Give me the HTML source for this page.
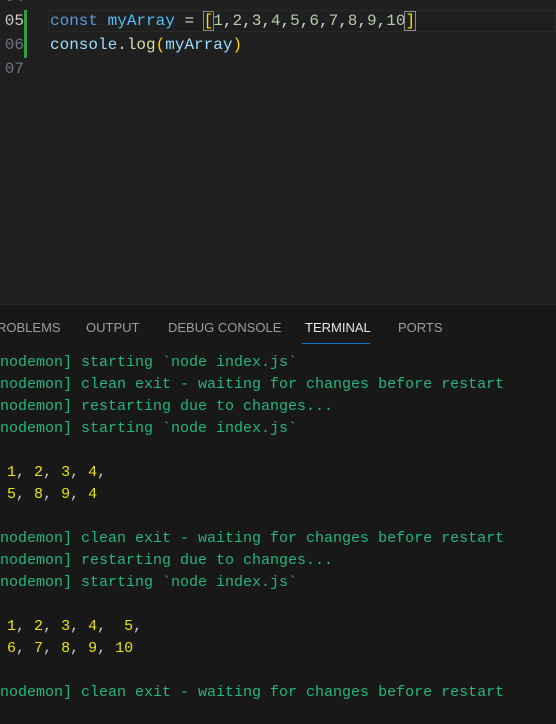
<!DOCTYPE html>
<html><head><style>
html,body{margin:0;padding:0;width:556px;height:723px;overflow:hidden;background:#1f1f1f;}
.ed{position:absolute;left:0;top:0;width:556px;height:304px;background:#1f1f1f;font-family:"Liberation Mono",monospace;font-size:16px;}
.ln{position:absolute;left:-6px;color:#6e7681;width:30px;text-align:right;}
.code{position:absolute;left:50px;white-space:pre;color:#d4d4d4;}
.panel{position:absolute;left:0;top:304px;width:556px;height:419px;background:#181818;border-top:1px solid #2b2b2b;}
.tab{position:absolute;top:15px;font-family:"Liberation Sans",sans-serif;font-size:13px;color:#9d9d9d;}
.t{position:absolute;white-space:pre;font-family:"Liberation Mono",monospace;font-size:15px;color:#23b77c;}
.y{color:#e5e510}.w{color:#cccccc}
</style></head><body>
<div class="ed">
<div class="ln" style="top:-12px">04</div>
<div class="ln" style="top:12px;color:#cccccc">05</div>
<div class="ln" style="top:36px">06</div>
<div class="ln" style="top:60px">07</div>
<div style="position:absolute;left:24px;top:10px;width:3px;height:48px;background:#2ea043"></div>
<div style="position:absolute;left:48px;top:10px;width:508px;height:22px;border:1px solid #282828;box-sizing:border-box"></div>
<div class="code" style="top:12px"><span style="color:#569cd6">const</span> <span style="color:#4fc1ff">myArray</span> = <span style="color:#ffd700;outline:1px solid #888">[</span><span style="color:#b5cea8">1</span>,<span style="color:#b5cea8">2</span>,<span style="color:#b5cea8">3</span>,<span style="color:#b5cea8">4</span>,<span style="color:#b5cea8">5</span>,<span style="color:#b5cea8">6</span>,<span style="color:#b5cea8">7</span>,<span style="color:#b5cea8">8</span>,<span style="color:#b5cea8">9</span>,<span style="color:#b5cea8">10</span><span style="color:#ffd700;outline:1px solid #888">]</span></div>
<div class="code" style="top:36px"><span style="color:#9cdcfe">console</span>.<span style="color:#dcdcaa">log</span><span style="color:#ffd700">(</span><span style="color:#9cdcfe">myArray</span><span style="color:#ffd700">)</span></div>
</div>
<div class="panel">
<div class="tab" style="left:-3px">ROBLEMS</div>
<div class="tab" style="left:86px">OUTPUT</div>
<div class="tab" style="left:168px">DEBUG CONSOLE</div>
<div class="tab" style="left:305px;color:#e7e7e7">TERMINAL</div>
<div style="position:absolute;left:302px;top:38px;width:68px;height:1px;background:#0078d4"></div>
<div class="tab" style="left:398px">PORTS</div>
</div>
<div class="t" style="left:-9px;top:354px">[nodemon] starting `node index.js`</div>
<div class="t" style="left:-9px;top:376px">[nodemon] clean exit - waiting for changes before restart</div>
<div class="t" style="left:-9px;top:398px">[nodemon] restarting due to changes...</div>
<div class="t" style="left:-9px;top:420px">[nodemon] starting `node index.js`</div>
<div class="t w" style="left:-2px;top:464px"> <span class="y">1</span>, <span class="y">2</span>, <span class="y">3</span>, <span class="y">4</span>,</div>
<div class="t w" style="left:-2px;top:486px"> <span class="y">5</span>, <span class="y">8</span>, <span class="y">9</span>, <span class="y">4</span></div>
<div class="t" style="left:-9px;top:530px">[nodemon] clean exit - waiting for changes before restart</div>
<div class="t" style="left:-9px;top:552px">[nodemon] restarting due to changes...</div>
<div class="t" style="left:-9px;top:574px">[nodemon] starting `node index.js`</div>
<div class="t w" style="left:-2px;top:618px"> <span class="y">1</span>, <span class="y">2</span>, <span class="y">3</span>, <span class="y">4</span>,  <span class="y">5</span>,</div>
<div class="t w" style="left:-2px;top:640px"> <span class="y">6</span>, <span class="y">7</span>, <span class="y">8</span>, <span class="y">9</span>, <span class="y">10</span></div>
<div class="t" style="left:-9px;top:684px">[nodemon] clean exit - waiting for changes before restart</div>
</body></html>
